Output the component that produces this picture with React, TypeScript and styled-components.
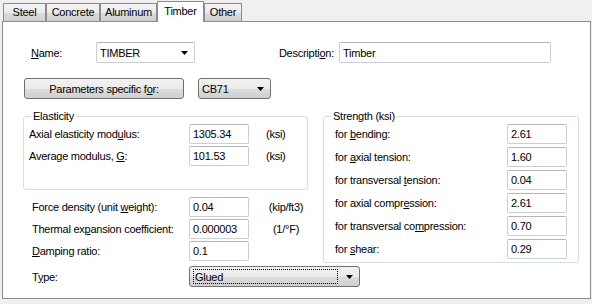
import React from "react";
import styled, { createGlobalStyle } from "styled-components";

const GlobalStyle = createGlobalStyle`
  html, body { margin: 0; padding: 0; background: #f0f0f0; }
  body {
    font-family: "Liberation Sans", Arial, sans-serif;
    font-size: 11px;
    letter-spacing: -0.25px;
    color: #000;
  }
  * { box-sizing: border-box; }
`;

const Window = styled.div`
  width: 592px;
  height: 304px;
  background: #f0f0f0;
  overflow: hidden;
`;

const TabBar = styled.div`
  display: flex;
  align-items: flex-end;
  height: 21px;
  padding-left: 3px;
`;

const Tab = styled.div<{ $w: number; $active?: boolean }>`
  width: ${(p) => p.$w}px;
  height: ${(p) => (p.$active ? 21 : 18)}px;
  margin-bottom: ${(p) => (p.$active ? -1 : 0)}px;
  position: relative;
  z-index: ${(p) => (p.$active ? 2 : 1)};
  border: 1px solid #898c95;
  border-bottom: none;
  background: ${(p) =>
    p.$active ? "#ffffff" : "linear-gradient(#f3f3f3 0%, #ebebeb 50%, #dddddd 51%, #cfcfcf 100%)"};
  display: flex;
  justify-content: center;
  align-items: ${(p) => (p.$active ? "flex-start" : "center")};
  padding-top: ${(p) => (p.$active ? 3 : 0)}px;
  line-height: 13px;
`;

const Panel = styled.div`
  margin-left: 2px;
  width: 589px;
  height: 278px;
  border: 1px solid #898c95;
  background: #fff;
  padding: 20px 0 0 0;
`;

const Row1 = styled.div`
  display: flex;
  align-items: center;
  height: 21px;
  padding-left: 28px;
`;

const Row2 = styled.div`
  display: flex;
  align-items: center;
  height: 21px;
  margin-top: 15px;
  padding-left: 21px;
  gap: 14px;
`;

const FieldLabel = styled.span<{ $w: number; $right?: boolean }>`
  width: ${(p) => p.$w}px;
  flex: none;
  text-align: ${(p) => (p.$right ? "right" : "left")};
  padding-right: ${(p) => (p.$right ? 5 : 0)}px;
  white-space: nowrap;
`;

const TextBox = styled.div<{ $w: number; $h?: number }>`
  width: ${(p) => p.$w}px;
  height: ${(p) => p.$h ?? 20}px;
  flex: none;
  border: 1px solid #c9ced7;
  border-top-color: #b3b7c0;
  border-radius: 2px;
  background: #fff;
  padding-left: 3px;
  display: flex;
  align-items: center;
  white-space: nowrap;
`;

const EditCombo = styled(TextBox)`
  justify-content: space-between;
  padding-right: 6px;
`;

const buttonBg = "linear-gradient(#f2f2f2 0%, #ebebeb 50%, #dddddd 51%, #cfcfcf 100%)";

const Button = styled.div<{ $w: number }>`
  width: ${(p) => p.$w}px;
  height: 21px;
  flex: none;
  border: 1px solid #707070;
  border-radius: 3px;
  background: ${buttonBg};
  display: flex;
  align-items: center;
  justify-content: center;
  white-space: nowrap;
`;

const DropCombo = styled.div<{ $w: number }>`
  width: ${(p) => p.$w}px;
  height: 21px;
  flex: none;
  border: 1px solid #707070;
  border-radius: 3px;
  background: ${buttonBg};
  display: flex;
  align-items: center;
  justify-content: space-between;
  padding: 0 6px 0 3px;
  white-space: nowrap;
`;

const FocusText = styled.span`
  flex: 1;
  height: 15px;
  margin-right: 8px;
  border: 1px dotted #000;
  display: flex;
  align-items: center;
  padding-left: 1px;
`;

const Main = styled.div`
  display: flex;
  margin-top: 17px;
  padding-left: 20px;
  gap: 15px;
`;

const LeftCol = styled.div`
  width: 285px;
  display: flex;
  flex-direction: column;
`;

const Group = styled.div<{ $w: number; $h: number; $pl: number }>`
  position: relative;
  width: ${(p) => p.$w}px;
  height: ${(p) => p.$h}px;
  border: 1px solid #d5dfe5;
  border-radius: 3px;
  padding: 7px 0 0 ${(p) => p.$pl}px;
  display: flex;
  flex-direction: column;
  gap: 2px;
`;

const GroupTitle = styled.span`
  position: absolute;
  top: -7px;
  left: 7px;
  padding: 0 2px;
  background: #fff;
  line-height: 13px;
`;

const StrengthRows = styled.div`
  display: flex;
  flex-direction: column;
  gap: 3px;
`;

const Row = styled.div`
  display: flex;
  align-items: center;
  height: 20px;
`;

const Unit = styled.span<{ $ml: number; $w?: number; $center?: boolean }>`
  margin-left: ${(p) => p.$ml}px;
  width: ${(p) => (p.$w ? `${p.$w}px` : "auto")};
  text-align: ${(p) => (p.$center ? "center" : "left")};
  white-space: nowrap;
`;

const LowerRows = styled.div`
  display: flex;
  flex-direction: column;
  gap: 2px;
  margin-top: 7px;
  padding-left: 9px;
`;

const TypeRow = styled.div`
  display: flex;
  align-items: center;
  height: 21px;
  margin-top: 3px;
`;

const Arrow = () => (
  <svg width="7" height="4" viewBox="0 0 7 4" style={{ flex: "none" }}>
    <path d="M0 0h7L3.5 4z" fill="#000" />
  </svg>
);

const strength: [React.ReactNode, string][] = [
  [<>for <u>b</u>ending:</>, "2.61"],
  [<>for <u>a</u>xial tension:</>, "1.60"],
  [<>for transversal <u>t</u>ension:</>, "0.04"],
  [<>for axial compr<u>e</u>ssion:</>, "2.61"],
  [<>for transversal co<u>m</u>pression:</>, "0.70"],
  [<>for <u>s</u>hear:</>, "0.29"],
];

export default function App() {
  return (
    <Window>
      <GlobalStyle />
      <TabBar>
        <Tab $w={43}>Steel</Tab>
        <Tab $w={54}>Concrete</Tab>
        <Tab $w={57}>Aluminum</Tab>
        <Tab $w={47} $active>Timber</Tab>
        <Tab $w={38}>Other</Tab>
      </TabBar>
      <Panel>
        <Row1>
          <FieldLabel $w={65}><u>N</u>ame:</FieldLabel>
          <EditCombo $w={99} $h={21}>
            <span>TIMBER</span>
            <Arrow />
          </EditCombo>
          <FieldLabel $w={144} $right>Descripti<u>o</u>n:</FieldLabel>
          <TextBox $w={212} $h={21}>Timber</TextBox>
        </Row1>
        <Row2>
          <Button $w={160}>Parameters specific f<u>o</u>r:</Button>
          <DropCombo $w={73}>
            <span>CB71</span>
            <Arrow />
          </DropCombo>
        </Row2>
        <Main>
          <LeftCol>
            <Group $w={285} $h={74} $pl={5}>
              <GroupTitle>Elasticity</GroupTitle>
              <Row>
                <FieldLabel $w={160}>Axial elasticity mod<u>u</u>lus:</FieldLabel>
                <TextBox $w={60}>1305.34</TextBox>
                <Unit $ml={17}>(ksi)</Unit>
              </Row>
              <Row>
                <FieldLabel $w={160}>Average modulus, <u>G</u>:</FieldLabel>
                <TextBox $w={60}>101.53</TextBox>
                <Unit $ml={17}>(ksi)</Unit>
              </Row>
            </Group>
            <LowerRows>
              <Row>
                <FieldLabel $w={157}>Force density (unit <u>w</u>eight):</FieldLabel>
                <TextBox $w={60}>0.04</TextBox>
                <Unit $ml={17} $w={40} $center>(kip/ft3)</Unit>
              </Row>
              <Row>
                <FieldLabel $w={157}>Thermal ex<u>p</u>ansion coefficient:</FieldLabel>
                <TextBox $w={60}>0.000003</TextBox>
                <Unit $ml={17} $w={40} $center>(1/°F)</Unit>
              </Row>
              <Row>
                <FieldLabel $w={157}><u>D</u>amping ratio:</FieldLabel>
                <TextBox $w={60}>0.1</TextBox>
              </Row>
              <TypeRow>
                <FieldLabel $w={157}>T<u>y</u>pe:</FieldLabel>
                <DropCombo $w={171}>
                  <FocusText>Glued</FocusText>
                  <Arrow />
                </DropCombo>
              </TypeRow>
            </LowerRows>
          </LeftCol>
          <Group $w={256} $h={147} $pl={11}>
            <GroupTitle>Strength (ksi)</GroupTitle>
            <StrengthRows>
              {strength.map(([label, value], i) => (
                <Row key={i}>
                  <FieldLabel $w={172}>{label}</FieldLabel>
                  <TextBox $w={60}>{value}</TextBox>
                </Row>
              ))}
            </StrengthRows>
          </Group>
        </Main>
      </Panel>
    </Window>
  );
}
